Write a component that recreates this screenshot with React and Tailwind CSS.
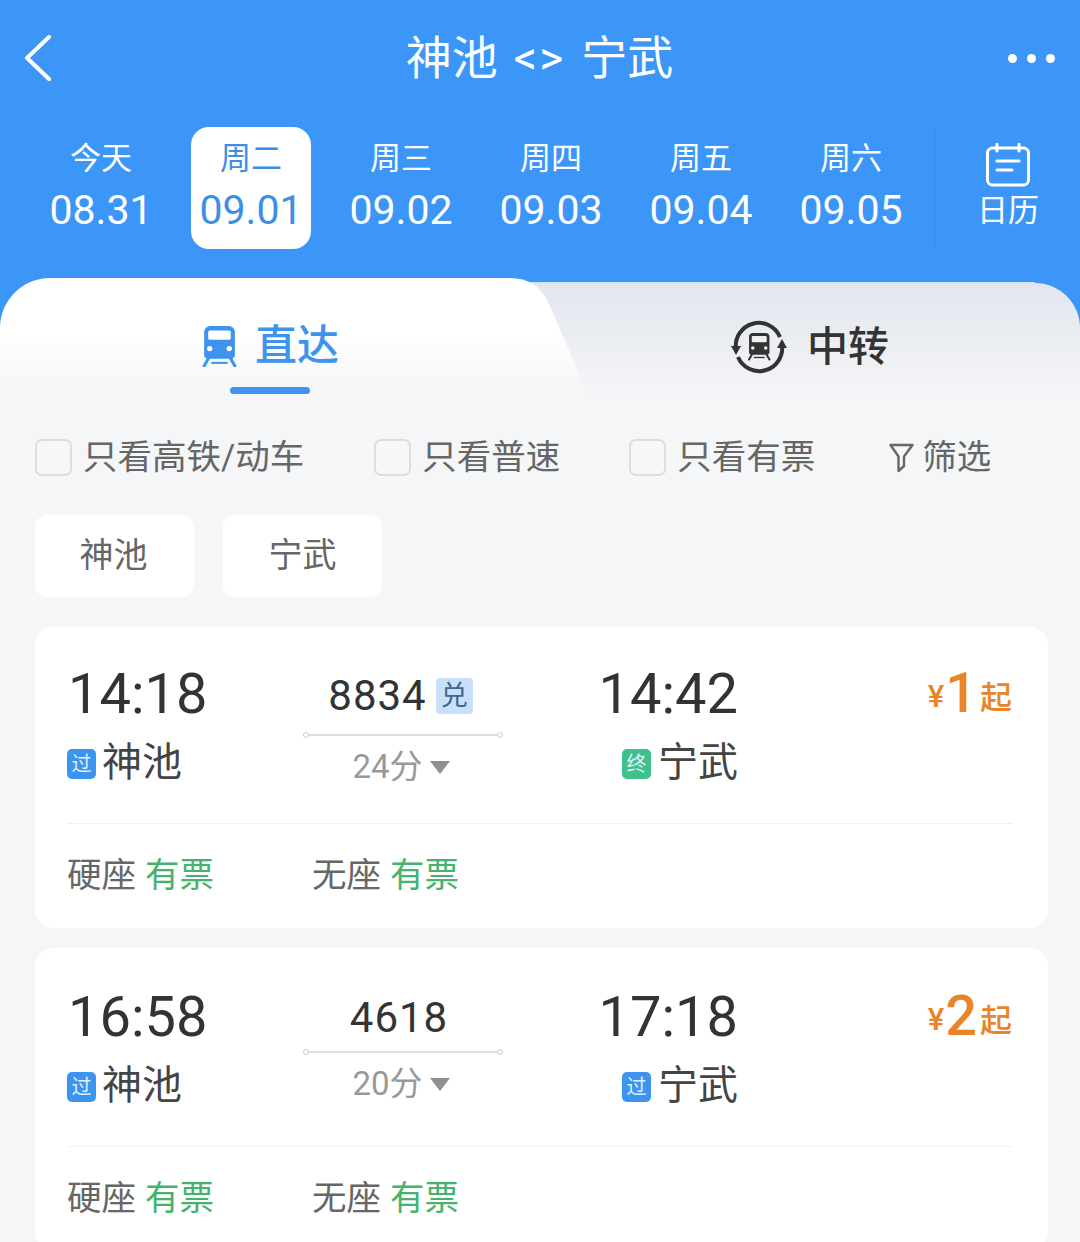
import React from 'react';

const days = [
  { label: '今天', date: '08.31' },
  { label: '周二', date: '09.01', active: true },
  { label: '周三', date: '09.02' },
  { label: '周四', date: '09.03' },
  { label: '周五', date: '09.04' },
  { label: '周六', date: '09.05' },
];

const trains = [
  { dep: '14:18', arr: '14:42', no: '8834', exchange: true, mins: '24分', price: '1', endTag: '终', endColor: 'bg-[#3fc08a]' },
  { dep: '16:58', arr: '17:18', no: '4618', exchange: false, mins: '20分', price: '2', endTag: '过', endColor: 'bg-[#3d94ee]' },
];

const TrainFront = ({ color, hole, x = 0, y = 0, scale = 1 }) => (
  <g transform={`translate(${x} ${y}) scale(${scale})`}>
    <path d="M9 0h18a6 6 0 0 1 6 6v22a4 4 0 0 1-4 4H7a4 4 0 0 1-4-4V6a6 6 0 0 1 6-6z" fill={color} />
    <rect x="7" y="4.5" width="22" height="9" rx="1.5" fill={hole} />
    <circle cx="8.5" cy="22" r="2.6" fill={hole} />
    <circle cx="27.5" cy="22" r="2.6" fill={hole} />
    <path d="M7 32 3 39M29 32l4 7" stroke={color} strokeWidth="3" strokeLinecap="round" fill="none" />
    <path d="M10 36h16" stroke={color} strokeWidth="2" fill="none" />
  </g>
);

const TransferIcon = () => (
  <svg width="56" height="56" viewBox="0 0 56 56" fill="none">
    <path d="M5 30A23 23 0 0 1 49 18" stroke="#333" strokeWidth="4" />
    <path d="M51 26A23 23 0 0 1 7 38" stroke="#333" strokeWidth="4" />
    <path d="M0 27h10l-5 9z" fill="#333" />
    <path d="M46 29h10l-5-9z" fill="#333" />
    <TrainFront color="#333" hole="#eef0f3" x={16} y={14} scale={0.68} />
  </svg>
);

const TabShape = () => (
  <svg className="absolute inset-0" width="1080" height="125" viewBox="0 0 1080 125" fill="none">
    <defs>
      <linearGradient id="tabRight" x1="0" y1="0" x2="0" y2="1">
        <stop offset="0" stopColor="#e2e6ed" />
        <stop offset="1" stopColor="#f5f6f8" />
      </linearGradient>
      <linearGradient id="tabLeft" x1="0" y1="0" x2="0" y2="1">
        <stop offset="0.45" stopColor="#ffffff" />
        <stop offset="0.85" stopColor="#f5f6f8" />
      </linearGradient>
    </defs>
    <rect width="1080" height="60" fill="#3b96f7" />
    <path d="M500 5h535a45 45 0 0 1 45 45v75H500z" fill="url(#tabRight)" />
    <path d="M500 4.5h535" stroke="#cfe2f8" strokeWidth="1" />
    <path d="M0 50A50 50 0 0 1 50 0H510C528 0 541 8 548 24L592 125H0z" fill="url(#tabLeft)" />
  </svg>
);

const Checkbox = ({ label, className }) => (
  <div className={`flex items-center gap-[11px] ${className}`}>
    <span className="w-[37px] h-[37px] rounded-[7px] border-2 border-[#dddddd] bg-[#f7f7f7]" />
    <span className="text-[34.5px] leading-[37px] text-[#666666]">{label}</span>
  </div>
);

const Tag = ({ text, color, className = '' }) => (
  <span className={`flex items-center justify-center w-[29px] h-[30px] mt-[2px] rounded-[5px] text-[20px] leading-none text-[#dff0ff] ${color} ${className}`}>
    {text}
  </span>
);

const Seat = ({ name, className }) => (
  <div className={`flex gap-[9px] text-[34.5px] leading-[40px] ${className}`}>
    <span className="text-[#666666]">{name}</span>
    <span className="text-[#45b36b]">有票</span>
  </div>
);

const TrainCard = ({ train }) => (
  <div className="bg-white rounded-[18px] pl-[33px] pr-[36px] h-[301px] mb-[20px] shrink-0">
    <div className={`grid grid-cols-[235px_200px_235px_1fr] border-b border-[#f1f1f1] ${train.exchange ? 'h-[197px] pt-[35px]' : 'h-[199px] pt-[37px]'}`}>
      <div>
        <div className="text-[56px] leading-[64px] text-[#333333]">{train.dep}</div>
        <div className="flex items-center gap-[6px] mt-[14px] h-[46px]">
          <Tag text="过" color="bg-[#3d94ee]" className="-ml-px" />
          <span className="text-[40px] leading-[46px] text-[#444444]">神池</span>
        </div>
      </div>
      <div className="flex flex-col items-center">
        <div className={`flex items-center gap-[9px] h-[40px] ${train.exchange ? 'mt-[14px] mr-[5px]' : 'mt-[13px] mr-[8px]'}`}>
          <span className="text-[42px] leading-[40px] tracking-[1px] text-[#333333]">{train.no}</span>
          {train.exchange && (
            <span className="flex items-center justify-center w-[37px] h-[36px] rounded-[4px] bg-[#c9e0fb] text-[27px] leading-none text-[#42668c]">兑</span>
          )}
        </div>
        <div className={`relative w-full h-[2px] bg-[#dedede] ${train.exchange ? 'mt-[18px]' : 'mt-[13px]'}`}>
          <span className="absolute left-0 top-[-2px] w-[6px] h-[6px] rounded-full border border-[#cccccc] bg-white" />
          <span className="absolute right-0 top-[-2px] w-[6px] h-[6px] rounded-full border border-[#cccccc] bg-white" />
        </div>
        <div className="flex items-center gap-[7px] h-[40px] mt-[11px] mr-[4px]">
          <span className="text-[33px] leading-[40px] text-[#999999]">{train.mins}</span>
          <svg width="20" height="13" viewBox="0 0 20 13"><path d="M0 0h20L10 13z" fill="#8f8f8f" /></svg>
        </div>
      </div>
      <div className="flex flex-col items-end">
        <div className="text-[56px] leading-[64px] text-[#333333]">{train.arr}</div>
        <div className="flex items-center gap-[7px] mt-[14px] h-[46px]">
          <Tag text={train.endTag} color={train.endColor} />
          <span className="text-[40px] leading-[46px] text-[#444444]">宁武</span>
        </div>
      </div>
      <div className="flex justify-end items-start h-[64px] text-[#e8852b]">
        <span className="text-[31px] leading-[40px] font-medium mt-[15px]">¥</span>
        <span className="text-[56px] leading-[64px] font-medium -mt-px mr-[3px] ml-px">{train.price}</span>
        <span className="text-[32px] leading-[40px] font-medium mt-[16px]">起</span>
      </div>
    </div>
    <div className="flex pt-[31px]">
      <Seat name="硬座" className="w-[245px] -ml-px" />
      <Seat name="无座" />
    </div>
  </div>
);

export default function App() {
  return (
    <div className="w-[1080px] h-[1242px] overflow-hidden flex flex-col bg-[#f5f6f8] [font-family:Roboto,'Noto_Sans_CJK_SC',sans-serif]">
      <header className="bg-[#3b96f7] h-[278px] shrink-0 text-white">
        <div className="flex items-center justify-between h-[116px] pl-[24px] pr-[25px]">
          <div className="w-[60px]">
            <svg width="28" height="46" viewBox="0 0 28 46" fill="none">
              <path d="M25 2 3 23l22 21" stroke="#fff" strokeWidth="4" strokeLinecap="round" strokeLinejoin="round" />
            </svg>
          </div>
          <h1 className="flex items-center gap-[16px] text-[46px] leading-[56px] font-normal">
            <span>神池</span>
            <span className="text-[46px] tracking-[2px]">&lt;&gt;</span>
            <span>宁武</span>
          </h1>
          <div className="w-[60px] flex justify-end gap-[10px]">
            <span className="w-[9px] h-[9px] rounded-full bg-white" />
            <span className="w-[9px] h-[9px] rounded-full bg-white" />
            <span className="w-[9px] h-[9px] rounded-full bg-white" />
          </div>
        </div>
        <div className="flex items-start pl-[26px] mt-[11px]">
          {days.map((d) => (
            <div key={d.date} className="w-[150px] flex justify-center">
              <div className={`w-[120px] h-[122px] rounded-[18px] flex flex-col items-center pt-[12px] ${d.active ? 'bg-white text-[#3d8fe6]' : ''}`}>
                <span className="text-[31px] leading-[40px]">{d.label}</span>
                <span className="text-[41px] leading-[50px] mt-[6px] whitespace-nowrap">{d.date}</span>
              </div>
            </div>
          ))}
          <div className="flex-1 flex flex-col items-center h-[122px] pt-[16px] ml-[9px] border-l border-[#3890ef]">
            <svg width="46" height="44" viewBox="0 0 46 44" fill="none">
              <rect x="2.5" y="5" width="41" height="37" rx="5" stroke="#fff" strokeWidth="3" />
              <path d="M12 1v7M34 1v7" stroke="#fff" strokeWidth="3" strokeLinecap="round" />
              <path d="M12 18h22M12 27h15" stroke="#fff" strokeWidth="3" strokeLinecap="round" />
            </svg>
            <span className="text-[31px] leading-[40px] mt-[4px]">日历</span>
          </div>
        </div>
      </header>

      <div className="relative h-[125px] shrink-0">
        <TabShape />
        <div className="relative flex h-full">
          <div className="w-[540px] flex flex-col items-center pt-[42px]">
            <div className="flex items-center gap-[17px] h-[52px]">
              <svg width="37" height="41" viewBox="0 0 36 40"><TrainFront color="#3d94ee" hole="#ffffff" /></svg>
              <span className="text-[42px] leading-[52px] font-medium text-[#3d94ee]">直达</span>
            </div>
            <span className="w-[80px] h-[7px] mt-[15px] rounded-full bg-[#3d94ee]" />
          </div>
          <div className="w-[540px] flex justify-center pt-[41px]">
            <div className="flex items-center gap-[20px] h-[56px]">
              <TransferIcon />
              <span className="text-[41px] leading-[52px] font-medium text-[#333333]">中转</span>
            </div>
          </div>
        </div>
      </div>

      <div className="flex items-center mt-[36px] px-[35px] shrink-0">
        <Checkbox label="只看高铁/动车" />
        <Checkbox label="只看普速" className="ml-[70px]" />
        <Checkbox label="只看有票" className="ml-[69px]" />
        <div className="flex items-center gap-[8px] ml-[74px]">
          <svg width="25" height="30" viewBox="0 0 25 30" fill="none">
            <path d="M1.5 2h22l-8.5 11.5V23l-5.5 5V13.5z" stroke="#666" strokeWidth="2.4" strokeLinejoin="round" />
          </svg>
          <span className="text-[34.5px] leading-[37px] text-[#666666]">筛选</span>
        </div>
      </div>

      <div className="flex gap-[29px] mt-[39px] px-[35px] shrink-0">
        <div className="w-[159px] h-[82px] rounded-[12px] bg-white flex items-center justify-center pb-[2px] pr-[2px] text-[34px] text-[#666666]">神池</div>
        <div className="w-[159px] h-[82px] rounded-[12px] bg-white flex items-center justify-center pb-[2px] text-[34px] text-[#666666]">宁武</div>
      </div>

      <div className="flex flex-col mt-[30px] mx-[35px] w-[1013px]">
        {trains.map((t) => (
          <TrainCard key={t.no} train={t} />
        ))}
      </div>
    </div>
  );
}
